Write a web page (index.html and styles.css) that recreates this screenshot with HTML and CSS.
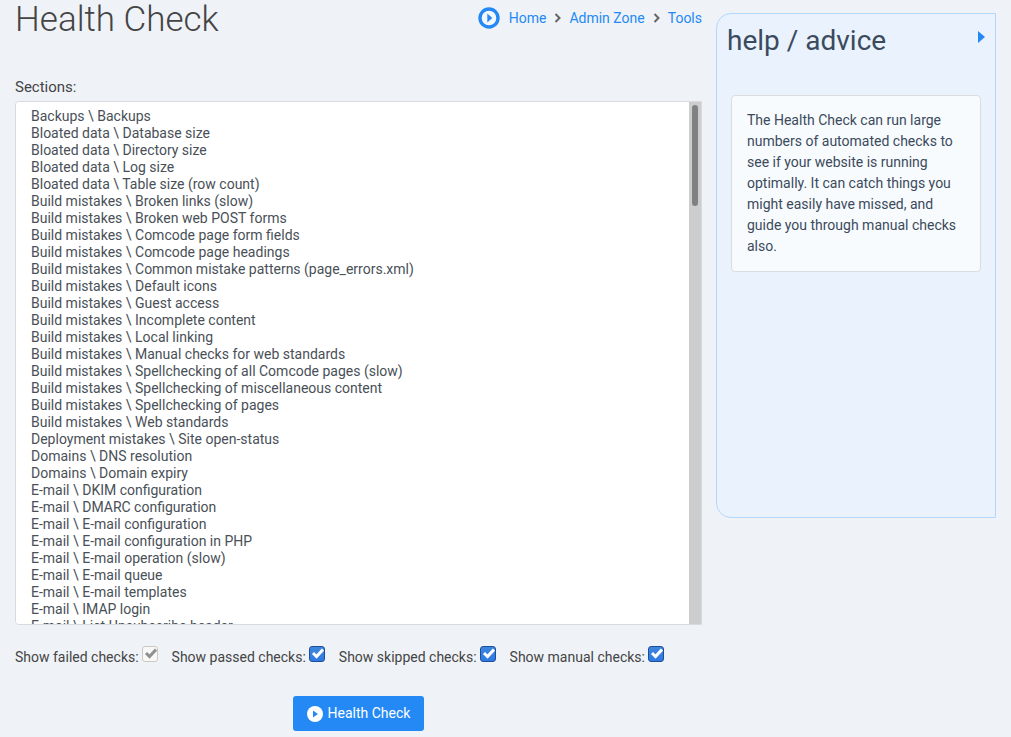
FILE: index.html
```html
<!DOCTYPE html>
<html lang="en">
<head>
<meta charset="utf-8">
<title>Health Check</title>
<link rel="stylesheet" href="styles.css">
</head>
<body>
<div class="page">
  <main class="main">
    <header class="top">
      <h1 class="title">Health Check</h1>
      <nav class="crumbs" aria-label="Breadcrumbs">
        <svg class="crumb-icon" viewBox="0 0 22 22" aria-hidden="true"><circle cx="11" cy="11" r="9" fill="#f4f8fd" stroke="#2589f5" stroke-width="3.400"/><path d="M9.300 6.500v9l5-4.500z" fill="#2589f5"/></svg>
        <a href="#">Home</a>
        <svg class="chevron" viewBox="0 0 7 10" aria-hidden="true"><path d="M1.500 1l4 4-4 4"/></svg>
        <a href="#">Admin Zone</a>
        <svg class="chevron" viewBox="0 0 7 10" aria-hidden="true"><path d="M1.500 1l4 4-4 4"/></svg>
        <a href="#">Tools</a>
      </nav>
    </header>
    <form class="form">
      <label class="label" for="sections">Sections:</label>
      <div class="list">
        <select class="sections" id="sections" multiple>
          <option>Backups \ Backups</option>
          <option>Bloated data \ Database size</option>
          <option>Bloated data \ Directory size</option>
          <option>Bloated data \ Log size</option>
          <option>Bloated data \ Table size (row count)</option>
          <option>Build mistakes \ Broken links (slow)</option>
          <option>Build mistakes \ Broken web POST forms</option>
          <option>Build mistakes \ Comcode page form fields</option>
          <option>Build mistakes \ Comcode page headings</option>
          <option>Build mistakes \ Common mistake patterns (page_errors.xml)</option>
          <option>Build mistakes \ Default icons</option>
          <option>Build mistakes \ Guest access</option>
          <option>Build mistakes \ Incomplete content</option>
          <option>Build mistakes \ Local linking</option>
          <option>Build mistakes \ Manual checks for web standards</option>
          <option>Build mistakes \ Spellchecking of all Comcode pages (slow)</option>
          <option>Build mistakes \ Spellchecking of miscellaneous content</option>
          <option>Build mistakes \ Spellchecking of pages</option>
          <option>Build mistakes \ Web standards</option>
          <option>Deployment mistakes \ Site open-status</option>
          <option>Domains \ DNS resolution</option>
          <option>Domains \ Domain expiry</option>
          <option>E-mail \ DKIM configuration</option>
          <option>E-mail \ DMARC configuration</option>
          <option>E-mail \ E-mail configuration</option>
          <option>E-mail \ E-mail configuration in PHP</option>
          <option>E-mail \ E-mail operation (slow)</option>
          <option>E-mail \ E-mail queue</option>
          <option>E-mail \ E-mail templates</option>
          <option>E-mail \ IMAP login</option>
          <option>E-mail \ List-Unsubscribe header</option>
        </select>
        <div class="scrollbar" aria-hidden="true"><div class="thumb"></div></div>
      </div>
      <div class="checks">
        <label class="check">Show failed checks: <input type="checkbox" checked disabled></label>
        <label class="check">Show passed checks: <input type="checkbox" checked></label>
        <label class="check">Show skipped checks: <input type="checkbox" checked></label>
        <label class="check">Show manual checks: <input type="checkbox" checked></label>
      </div>
      <button class="submit" type="button">
        <svg class="submit-icon" viewBox="0 0 16 16" aria-hidden="true"><circle cx="8" cy="8" r="8" fill="#fff"/><path d="M6 4.500v7l5-3.500z" fill="#2589f5"/></svg>
        Health Check
      </button>
    </form>
  </main>
  <aside class="help">
    <div class="help-head">
      <h2 class="help-title">help / advice</h2>
      <button class="help-toggle" type="button" aria-label="Hide help"><svg viewBox="0 0 7 12" aria-hidden="true"><path d="M0 0v12l7-6z" fill="#2589f5"/></svg></button>
    </div>
    <p class="help-text">The Health Check can run large numbers of automated checks to see if your website is running optimally. It can catch things you might easily have missed, and guide you through manual checks also.</p>
  </aside>
</div>
</body>
</html>
```

FILE: styles.css
```css
* { box-sizing: border-box; }

body {
  margin: 0;
  background: #eff3f8;
  color: #444;
  font: 14px/21px Roboto, sans-serif;
}

.page {
  display: flex;
  align-items: flex-start;
  gap: 14px;
  padding: 0 15px;
}

.main { flex: 1; min-width: 0; }

.top {
  display: flex;
  justify-content: space-between;
  align-items: flex-start;
  height: 77px;
}

.title {
  margin: 0;
  font-size: 35px;
  line-height: 40px;
  font-weight: 300;
}

.crumbs {
  display: flex;
  align-items: center;
  gap: 8px;
  padding-top: 7px;
}
.crumbs a { color: #2589f5; text-decoration: none; }
.crumb-icon { width: 22px; height: 22px; margin-right: 1px; }
.chevron {
  width: 7px;
  height: 10px;
  fill: none;
  stroke: #666;
  stroke-width: 2;
}

.form { display: flex; flex-direction: column; }

.label {
  font-size: 15px;
  margin-bottom: 3px;
}

.list { position: relative; }
.sections {
  display: block;
  width: 100%;
  height: 524px;
  padding: 6px 0 0 13px;
  border: 1px solid #d9dadc;
  border-radius: 4px 0 0 4px;
  background: #fff;
  color: #495057;
  font: 14px/17px Roboto, sans-serif;
  outline: 0;
  scrollbar-width: none;
}
.sections option { min-height: 17px; padding: 0 2px; }
.scrollbar {
  position: absolute;
  inset: 1px 1px 1px auto;
  width: 12px;
  padding: 3px;
  background: #cdcdcd;
}
.thumb {
  height: 101px;
  border-radius: 3px;
  background: #7f8281;
}

.checks {
  display: flex;
  gap: 14px;
  padding-top: 21px;
}
.check {
  display: flex;
  align-items: flex-start;
  gap: 3px;
  line-height: 23px;
}
.check input {
  appearance: none;
  width: 16px;
  height: 16px;
  margin: 0;
  border: 1px solid #1b4f9c;
  border-radius: 3px;
  background: url("data:image/svg+xml,%3Csvg xmlns='http://www.w3.org/2000/svg' viewBox='0 0 14 14'%3E%3Cpath d='M3 6l3.500 3.500L13 2.500' fill='none' stroke='white' stroke-width='3'/%3E%3C/svg%3E"), linear-gradient(#3f86dd, #2f79e3);
}
.check input:disabled {
  border-color: #cdc7c2;
  background: #faf8f7 url("data:image/svg+xml,%3Csvg xmlns='http://www.w3.org/2000/svg' viewBox='0 0 14 14'%3E%3Cpath d='M3 6l3.500 3.500L13 2.500' fill='none' stroke='%238e9192' stroke-width='3'/%3E%3C/svg%3E");
}

.submit {
  display: flex;
  align-self: center;
  align-items: center;
  gap: 5px;
  margin-top: 27px;
  height: 35px;
  padding: 0 14px;
  border: 0;
  border-radius: 3px;
  background: #2589f5;
  color: #fff;
  font: 14px/21px Roboto, sans-serif;
}
.submit-icon { width: 16px; height: 16px; }

.help {
  width: 280px;
  min-height: 505px;
  margin-top: 13px;
  padding: 10px;
  border: 1px solid #b3d7fb;
  border-radius: 15px 0 0 15px;
  background: #eaf2fe;
  color: #3b4a5c;
}
.help-head {
  display: flex;
  justify-content: space-between;
  align-items: flex-start;
  height: 71px;
}
.help-title {
  margin: 0;
  font-size: 28px;
  line-height: 34px;
  font-weight: 400;
}
.help-toggle {
  padding: 0;
  margin-top: 7px;
  border: 0;
  background: none;
}
.help-toggle svg { display: block; width: 7px; height: 12px; }
.help-text {
  margin: 0 4px;
  padding: 14px 15px;
  border: 1px solid #dcdddf;
  border-radius: 4px;
  background: #f8fbfe;
}
```
